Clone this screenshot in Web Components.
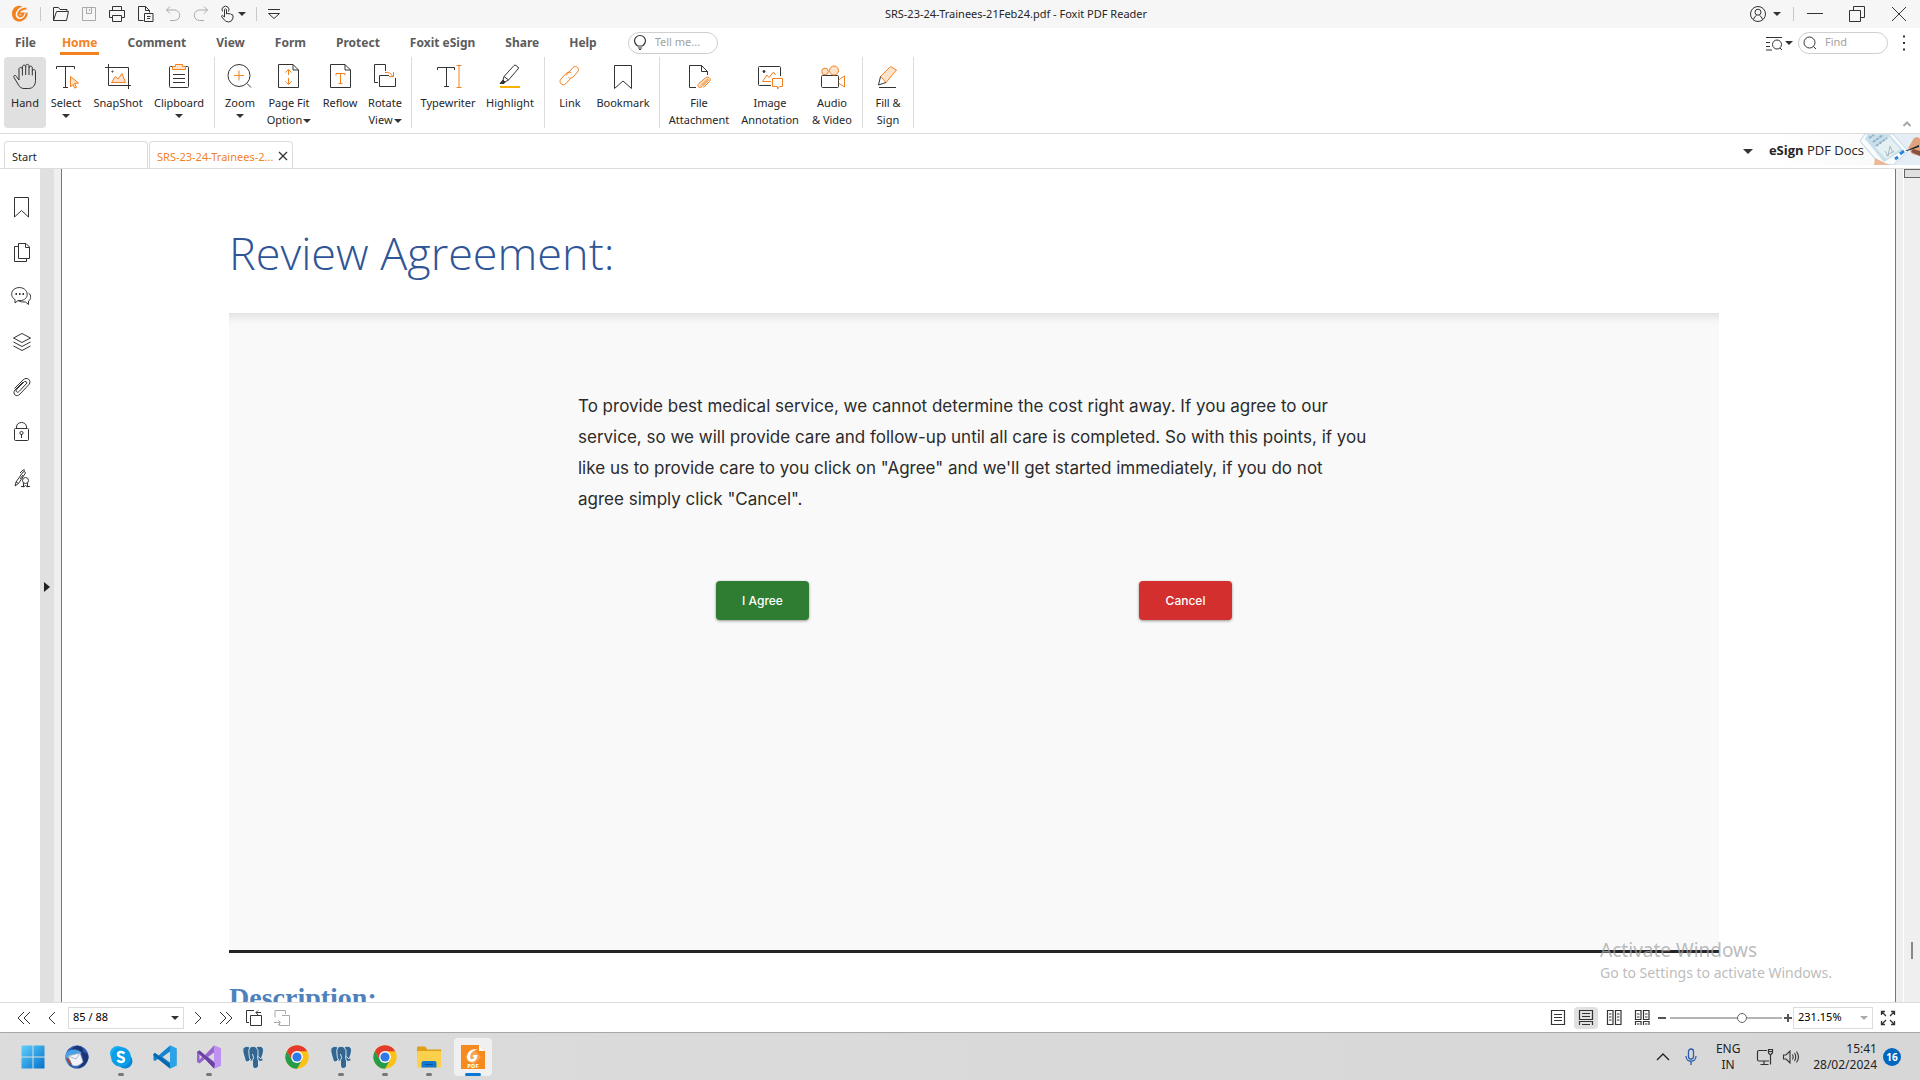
<!DOCTYPE html>
<html lang="en">
<head>
<meta charset="utf-8">
<title>SRS-23-24-Trainees-21Feb24.pdf - Foxit PDF Reader</title>
<style>
html, body { margin: 0; height: 100%; }
body { font-family: "Noto Sans", "Open Sans", sans-serif; font-size: 11px; color: #262626; background: #fff; overflow: hidden; }
</style>
</head>
<body>
<pdf-app></pdf-app>
<script>
const O = 'stroke="#f4811f"';
const ICONS = {
  logo: [18, '<path d="M11.500 1.500C5 -1 .500 4 1 9.500C1.500 15 6.500 18 11 16C15 14.500 17 11 16.500 7L14.500 8.500C14 11.500 12 14 9 14C5.500 14 4 11 5 7.500C6 4.500 8.500 2.500 11.500 1.500Z" fill="#f4811f" stroke="none"/><path d="M8.500 8.500H12.500Q11.500 11.500 9 11.500Q6.800 11 7.500 8Q9 4 15.500 3.500" stroke="#f4811f" stroke-width="2"/>'],
  open: [18, '<path d="M1.500 15.500V2.500H6.500L8 4.500H15V6.500M1.500 15.500L4.500 6.500H16.500L14.500 15.500Z"/>'],
  save: [18, '<path d="M2.500 2.500H15.500V15.500H2.500ZM6.500 2.500V8.500H11.500V2.500M9.500 4V6"/>'],
  print: [18, '<path d="M4.500 5.500V1.500H13.500V5.500M4.500 12.500H1.500V5.500H16.500V12.500H13.500M4.500 10.500H13.500V16.500H4.500Z"/>'],
  docout: [18, '<path d="M7.500 15.500H2.500V1.500H9.500L13.500 5.500V7.500M9.500 1.500V5.500H13.500M8.500 8.500H17V16.500H8.500ZM11 11.500H14.500M11 13.500H14"/>'],
  undo: [18, '<path d="M6 1.500L2.500 5L6 8.500M2.500 5H10.500A5 5 0 0 1 10.500 15.500H6"/>'],
  redo: [18, '<path d="M12 1.500L15.500 5L12 8.500M15.500 5H7.500A5 5 0 0 0 7.500 15.500H12"/>'],
  touch: [18, '<path d="M6.500 12V4.500Q7.500 3 8.500 4.500V9Q10 7.500 11 9Q12.500 8 13 9.500Q15 9 15 11V13Q14 17 10.500 17Q7.500 17 5.500 14L3.500 11.500Q3.500 9.500 6.500 12M4.500 6.500A3.500 3.500 0 1 1 10.500 6.500"/>'],
  custom: [18, '<path d="M3 4.500H15M3.500 8.500L9 13.500L14.500 8.500Z"/>'],
  user: [18, '<circle cx="9" cy="9" r="7.500"/><circle cx="9" cy="7.200" r="3"/><path d="M4.500 14.500Q5 11.500 7.500 10.500M13.500 14.500Q13 11.500 10.500 10.500"/>'],
  min: [18, '<path d="M1 8.500H17"/>'],
  restore: [18, '<path d="M5.500 5.500V1.500H16.500V12.500H12.500M1.500 5.500H12.500V16.500H1.500Z"/>'],
  close: [18, '<path d="M2 2L16 16M16 2L2 16"/>'],
  bulb: [18, '<path d="M6.500 12Q3.500 9.500 3.500 7A5.500 5.500 0 0 1 14.500 7Q14.500 9.500 11.500 12ZM7 14H11M8 15.500H10" stroke-width="1.200"/>'],
  advsearch: [18, '<path d="M1 3.500H17M1 8.500H5M1 12.500H5M1 16H7"/><circle cx="12" cy="10.500" r="4.500"/><path d="M15 14L17 16"/>'],
  search: [18, '<circle cx="8.500" cy="8.500" r="5.500"/><path d="M12.500 12.500L15 15"/>'],
  dots: [18, '<path d="M8 2.500H10M8 9H10M8 15.500H10" stroke-width="2"/>'],
  up: [10, '<path d="M1.500 7L5 3.500L8.500 7" stroke="#a8a8a8" stroke-width="2"/>'],
  x: [10, '<path d="M1 1L9 9M9 1L1 9" stroke-width="1.300"/>'],
  hand: [28, '<path d="M8 18L5.500 14.500C4.500 12.500 2 13.500 3 15.500L7.500 23C9 25.500 10.500 26.500 13 26.500H17.500C22 26.500 24.500 23 24.500 18.500V9.500C24.500 7 21.300 7 21.300 9.500V13.500M21.300 9.500V6C21.300 3.500 18 3.500 18 6V13M18 6V4C18 1.800 14.700 1.800 14.700 4V13M14.700 5C14.700 2.500 11.400 2.500 11.400 5V13.500M11.400 7C11.400 5 8 5 8 7V18"/>'],
  select: [28, '<path d="M4.500 7V4.500H22.500V7M13.500 4.500V25.500M11 25.500H16"/><path d="M18.500 14.500L26.500 21L22.500 21.500L24.500 25.500L22.500 26L21 22.500L18.500 25Z" fill="#fde3cb" '+O+'/>'],
  snapshot: [28, '<path d="M1 5.500H24.500V27M4.500 2V23.500H27"/><path d="M7.500 20.500L11.500 14.500L14 17L18 11.500L21.500 20.500Z" fill="#fde3cb" '+O+'/><circle cx="8.500" cy="9.500" r=".6"/>'],
  clipboard: [28, '<path d="M7.500 4.500H5.500Q4.500 4.500 4.500 5.500V24.500Q4.500 25.500 5.500 25.500H22.500Q23.500 25.500 23.500 24.500V5.500Q23.500 4.500 22.500 4.500H20.500M8 12.500H20M8 16.500H20M8 20.500H20"/><path d="M7.500 7.500V4.500H10.500V2.500H17.500V4.500H20.500V7.500Z" fill="#fde3cb" '+O+'/>'],
  zoom: [28, '<circle cx="13" cy="13.500" r="11"/><path d="M21 21.500L25 25.500"/><path d="M8 13.500H18M13 8.500V18.500" '+O+'/>'],
  pagefit: [28, '<path d="M3.500 2.500H18L23.500 8V25.500H3.500ZM18 2.500V8H23.500"/><path d="M13.500 8V13M10.500 10.500L13.500 7.500L16.500 10.500M13.500 16V22M10.500 19.500L13.500 22.500L16.500 19.500" '+O+'/>'],
  reflow: [28, '<path d="M4.500 2.500H19L24.500 8V25.500H4.500ZM19 2.500V8H24.500"/><path d="M10 13.500V11.500H19V13.500M14.500 11.500V21.500M12.500 21.500H16.500" '+O+'/>'],
  rotate: [28, '<path d="M7 20.500H3.500V2.500H14.500V9M12.500 13.500H8.500V24.500H24.500V16M18 13.500H12"/><path d="M14 10.500Q19.500 9.500 22 15M18 14.500H22.500V10" '+O+'/>'],
  typewriter: [28, '<path d="M3.500 8V5.500H20.500V8M12.500 5.500V24.500M10 24.500H15"/><path d="M22.500 3.500H27.500M22.500 25.500H27.500M25 3.500V25.500" '+O+'/>'],
  highlight: [28, '<path d="M8 14.500L18 3.500Q19 2.500 20 3.500L22 5Q23 6 22 7L12.500 18ZM8 14.500L7 18L9 20L12.500 18"/><path d="M7 18L4 21.500H8L9 20Z" fill="#333"/><path d="M4 25H24" stroke="#fbb000" stroke-width="2"/>'],
  link: [28, '<path d="M10 13.500L17 5.500C20 2.500 24.500 6.500 21.500 10L17 15C15.500 16.500 13.500 16.500 12.500 15.500M15.500 11C14 9.500 11.500 10 10 11.500L5 17C2 20.500 6.500 25 10 21.500L14.500 16.500" '+O+'/>'],
  bookmark: [28, '<path d="M5.500 3.500H22.500V26.500L14 19L5.500 26.500Z"/>'],
  attach: [28, '<path d="M11 25.500H4.500V3.500H16.500L22.500 9.500V13M16.500 3.500V9.500H22.500"/><path d="M16 23.500L22 17.500Q23.500 17 23 18.500L17 24.500C14 27 11.500 24 14 21.500L20 16.200C23 13.500 27 16.500 24.500 19.500L18.500 25.500" fill="#fde3cb" '+O+'/>'],
  imageann: [28, '<path d="M15 23.500H3.500Q2.500 23.500 2.500 22.500V5.500Q2.500 4.500 3.500 4.500H23.500Q24.500 4.500 24.500 5.500V14"/><circle cx="8" cy="9.500" r="1" fill="#333"/><path d="M15 19.500H6.500L11 13L13 15.500L17.500 10L19.500 13M16.500 16.500H26.500V24.500H23.500L21.500 27V24.500H16.500Z" '+O+'/>'],
  video: [28, '<rect x="3.500" y="13.500" width="17" height="12" rx="1"/><path d="M20.500 18L26.500 14V25L20.500 21" '+O+'/><circle cx="7" cy="9.500" r="3.300" fill="#fde3cb" '+O+'/><circle cx="16" cy="8.500" r="4.500" fill="#fde3cb" '+O+'/>'],
  fill: [28, '<path d="M6.500 14.500L16.500 4.500L22.500 8L12 20.500Z" fill="#fde3cb" '+O+'/><path d="M6.500 14.500L4.500 23L12 20.500M5 25.500H22"/>'],
  pages: [22, '<path d="M7 5.500H3.500V20.500H15.500V17.500M7.500 2.500H15L18.500 6V17.500H7.500ZM14.500 2.500V6.500H18.500"/>'],
  mark22: [22, '<path d="M3.500 1.500H17.500V21L10.500 14.500L3.500 21Z"/>'],
  chat: [22, '<path d="M4 13.500V17L7 14.500C19 16 19 2 8.500 1.500C-1 2 -1 11 4 13.500M17.500 7C21 9 19.500 14.500 17.500 15V18.500L14.500 16Q10 16.500 7 14.500"/><path d="M4.500 8H6M8 8H9.500M11.500 8H13" stroke-width="2"/>'],
  layers: [22, '<path d="M2.500 7L11 2.500L19.500 7L11 11.500ZM2.500 11L11 15.500L19.500 11M2.500 15L11 19.500L19.500 15"/>'],
  clip: [22, '<path d="M6 13L13.500 5.500Q15.500 5 16 7L8 15.500C6 17.500 4 15 6 13M3.500 12.500L12 4C16 0 21 4.500 18 8.500L9 18C5.500 22 1 18 4 14L12 6"/>'],
  lock: [22, '<rect x="3.500" y="7.500" width="14" height="12" rx="1"/><path d="M5.500 7.500V6C5.500 0 15.500 0 15.500 6V7.500M10.500 13V17"/><circle cx="10.500" cy="12" r="1.600"/>'],
  sign: [22, '<path d="M4 20L5 16L12 6Q14 4.500 14.500 7L7.500 17.500L4 20M9 7L12 4H14M5 16L7.500 17.500M9 13L12 9"/><circle cx="14.500" cy="14.500" r="3"/><path d="M12.500 17V21L14.500 19.500L16.500 21V17M10 20.500H12M17 20.500H19"/>'],
  first: [18, '<path d="M9 3L3 9L9 15M15 3L9 9L15 15"/>'], prev: [18, '<path d="M12 3L6 9L12 15"/>'],
  next: [18, '<path d="M6 3L12 9L6 15"/>'], last: [18, '<path d="M3 3L9 9L3 15M9 3L15 9L9 15"/>'],
  back: [18, '<path d="M4 13.500H1.500V1.500H9M5.500 6.500H16.500V16.500H5.500ZM16 3.500H11M13 1.500L11 3.500L13 6"/>'],
  fwd: [18, '<path d="M2 8.500V1.500H12.500V5M9 6.500H16.500V16.500H6.500V14M1 13.500H7M5 11L7.500 13.500L5 16"/>'],
  v1: [18, '<path d="M2.500 1.500H15.500V15.500H2.500ZM5 5.500H13M5 8.500H13M5 11.500H13" stroke-width="1.200"/>'],
  v2: [18, '<path d="M2.500 10.500V1.500H15.500V10.500ZM5 4.500H13M5 7.500H13M2.500 16V12.500H15.500V16M5 15.500H13" stroke-width="1.200"/>'],
  v3: [18, '<path d="M2.500 1.500H8V15.500H2.500ZM10.500 1.500H16V15.500H10.500ZM4 5H6.500M4 8H6.500M4 11H6.500M12 5H14.500M12 8H14.500M12 11H14.500" stroke-width="1.200"/>'],
  v4: [18, '<path d="M2.500 1.500H8V10.500H2.500ZM10.500 1.500H16V10.500H10.500ZM4 5H6.500M4 8H6.500M12 5H14.500M12 8H14.500M2.500 16V12.500H8V16M10.500 16V12.500H16V16M4 15H6.500M12 15H14.500" stroke-width="1.200"/>'],
  minus: [10, '<path d="M1 5H9" stroke="#555" stroke-width="2"/>'],
  plus: [10, '<path d="M1 5H9M5 1V9" stroke="#555" stroke-width="2"/>'],
  full: [18, '<path d="M2.500 6V2.500H6M2.500 2.500L7 7M12 2.500H15.500V6M15.500 2.500L11 7M2.500 12V15.500H6M2.500 15.500L7 11M15.500 12V15.500H12M15.500 15.500L11 11" stroke-width="1.300"/>'],
  chevup: [18, '<path d="M3 12L9 6L15 12" stroke="#222" stroke-width="1.400"/>'],
  mic: [18, '<rect x="6.500" y="1" width="5" height="10" rx="2.500" stroke="#2a5db0" stroke-width="1.300"/><path d="M4 8C4 15 14 15 14 8M9 13.500V17" stroke="#2a5db0" stroke-width="1.300"/>'],
  net: [18, '<path d="M11 2.500H3Q1.500 2.500 1.500 4V11.500Q1.500 13 3 13H13M8 13V16.500M4.500 16.500H12.500M14.500 7V16.500M12.500 1.500H16.500V5L14.500 7L12.500 5ZM12.500 3.500H16.500" stroke-width="1.200"/>'],
  vol: [18, '<path d="M1.500 7V11H4L8 15V3L4 7ZM10.500 6.500Q12 9 10.500 11.500M12.500 5Q15 9 12.500 13M14.500 3.500Q18.500 9 14.500 14.500" stroke-width="1.100"/>'],
  win: [24, '<defs><linearGradient id="w" x1="0" y1="0" x2="1" y2="1"><stop stop-color="#5fd0fb"/><stop offset="1" stop-color="#0470cc"/></linearGradient></defs><path d="M.5.500H11.500V11.500H.5ZM12.500.500H23.500V11.500H12.500ZM.5 12.500H11.500V23.500H.5ZM12.500 12.500H23.500V23.500H12.500Z" fill="url(#w)" stroke="none"/>'],
  bird: [24, '<circle cx="12" cy="12" r="11.500" fill="#2a5eb3" stroke="none"/><path d="M12 .500Q20 2 18 7Q24 8 23.500 13Q21 22 12 23.500Q20 18 17 10Q14 4 6 5Q9 1 12 .500Z" fill="#1d3577" stroke="none"/><path d="M0 12Q1 6 6 5Q12 3 17 8Q12 8 10 10Q4 12 5 17L3 19Q0 16 0 12Z" fill="#49a2e8" stroke="none"/><path d="M3 11L15 8L18 17Q12 23 7 20Z" fill="#f1f3f8" stroke="#9ba7bd" stroke-width=".7"/><path d="M3 11L11 14L15 8" stroke="#9ba7bd" stroke-width=".8"/><path d="M1 14Q3 10 7 20Q3 19 1 14Z" fill="#9a4b47" stroke="none"/>'],
  skype: [24, '<circle cx="8.500" cy="8.500" r="7.500" fill="#1bb0ef" stroke="none"/><circle cx="16" cy="16" r="7.500" fill="#0a86d8" stroke="none"/><circle cx="12" cy="12" r="10" fill="#0b9fe8" stroke="none"/><path d="M15.500 8.500Q14 7 12 7Q9 7 9 9.300Q9 11.200 12 12Q15.300 12.800 15 15Q14.500 17 12 17Q9.500 17 8.500 15.200" stroke="#fff" stroke-width="2.500"/>'],
  code: [24, '<path d="M17 .500L23.500 3.500V20.500L17 23.500L5.500 13.500L2 16L.5 15V9L2 8L5.500 10.500Z" fill="#1384cf" stroke="none"/><path d="M17 6.500L9.500 12L17 17.500Z" fill="#dadada" stroke="none"/><path d="M17 .500L23.500 3.500V20.500L17 23.500Z" fill="#29a3ea" stroke="none"/><path d="M.5 9L2 8L17 19V23.500L.5 10.500Z" fill="#0568b0" stroke="none"/>'],
  vs: [24, '<path d="M0 7L2.500 5.500L8 10L17 .500L24 3.500V20.500L17 23.500L8 14L2.500 18.500L0 17Z" fill="#9864cf" stroke="none"/><path d="M2.500 9.500V14.500L5 12ZM17 7.500L11 12L17 16.500Z" fill="#dadada" stroke="none"/><path d="M17 .500L24 3.500V20.500L17 23.500Z" fill="#be91f2" stroke="none"/><path d="M0 7L2.500 5.500L18 18.500L17 23.500L8 14Z" fill="#6942a1" stroke="none"/>'],
  pg: [24, '<path d="M2 3Q5 0 9 2Q12 .500 15 2Q20 0 22 3Q23.500 6 20.500 13L22.500 15Q20 17.500 17.500 16V21Q17 24 13.500 23.500Q11 23 11.500 16Q9 17.500 9 15Q5 20 3.500 13Q1 6 2 3Z" fill="#336791" stroke="#eef2f5" stroke-width=".8"/><path d="M9 2Q7 5 8 9Q8 13 9.500 15M15 2Q18 5 17 10Q16 13 17.500 16M11 16Q14 13 11.500 9M16.500 11L20 14" stroke="#e8edf2" stroke-width=".9"/>'],
  chrome: [24, '<circle cx="12" cy="12" r="11.700" fill="#fbc116" stroke="none"/><path d="M1.870 6.150A11.700 11.700 0 0 1 22.130 6.150H12L7 15Z" fill="#e33b2e" stroke="none"/><path d="M1.870 6.150A11.700 11.700 0 0 0 12 23.700L17.070 14.930L12 17.500L7 14.900Z" fill="#249c4b" stroke="none"/><circle cx="12" cy="12" r="5.900" fill="#fff" stroke="none"/><circle cx="12" cy="12" r="4.600" fill="#2f78e8" stroke="none"/>'],
  folder: [24, '<path d="M0 2.500Q0 1.500 1 1.500H8L10.500 4.500H24V8H0Z" fill="#dea017" stroke="none"/><rect y="6" width="24" height="16.500" rx="1" fill="#fbd04c" stroke="none"/><path d="M4.500 22.500V18Q4.500 16 6.500 16H17.500Q19.500 16 19.500 18V22.500Z" fill="#1277cf" stroke="none"/><path d="M8 19.500H16" stroke="#0c559c"/>'],
  foxit: [24, '<path d="M0 0H18L24 6V24H0Z" fill="#f68a1e" stroke="none"/><path d="M18 0V6H24Z" fill="#fff" stroke="none"/><path d="M12 4L20 12L12 20L4 12Z" fill="#f9a452" stroke="none"/><path d="M17 4.500Q9 3 6.500 9Q4.500 16 10.500 17Q16 16.500 16.500 10H12L11.500 12H13.500Q12.500 14.500 10.500 14.300Q8.500 13.500 9.500 9.500Q11 5.500 17 4.500Z" fill="#fff" stroke="none"/>']
};
function define(name, css, html, setup) {
  const tpl = document.createElement('template');
  tpl.innerHTML = '<style>:host{display:block;box-sizing:border-box}*{box-sizing:border-box}button,input,select{font:inherit;color:inherit;margin:0;border:0;background:none;padding:0;outline:0}' + css + '</style>' + html;
  customElements.define(name, class extends HTMLElement {
    constructor() { super(); this.attachShadow({ mode: 'open' }).append(tpl.content.cloneNode(true)); }
    connectedCallback() { if (setup) setup(this, this.shadowRoot); }
  });
}
// Fills an element's <i> placeholder with the icon named by its "icon" attribute.
function placeIcon(el, r) {
  const i = document.createElement('ui-icon');
  i.setAttribute('name', el.getAttribute('icon'));
  r.querySelector('i').replaceWith(i);
}
define('ui-icon', ':host{display:block;flex:none;color:#333}svg{display:block;overflow:visible}', '<svg aria-hidden="true" fill="none" stroke="currentColor"></svg>', (el, r) => {
  const [size, body] = ICONS[el.getAttribute('name')];
  const s = r.querySelector('svg');
  s.setAttribute('width', size); s.setAttribute('height', size); s.setAttribute('viewBox', `0 0 ${size} ${size}`);
  s.innerHTML = body;
});
define('ui-caret', ':host{flex:none;width:0;height:0;border:solid transparent;border-width:4px 4px 0;border-top-color:#333}', '');
define('ui-sep', ':host{flex:none;width:1px;height:14px;background:#c9c9c9}', '');
define('icon-button', ':host{flex:none}button{display:flex;align-items:center;justify-content:var(--at,center);gap:2px;width:var(--w,28px);height:28px}:host([dim]) ui-icon{color:#a9a9a9}', '<button type="button"><i></i><slot></slot></button>', (el, r) => {
  r.querySelector('button').setAttribute('aria-label', el.getAttribute('icon'));
  placeIcon(el, r);
});
define('search-pill', ':host{flex:none;width:var(--w)}label{display:flex;align-items:center;gap:6px;height:22px;border:1px solid #cfcfcf;border-radius:11px;padding-left:2px}input{flex:1;min-width:0;height:20px;padding-bottom:2px}input::placeholder{color:#a2a2a2;opacity:1}', '<label><i></i><input type="text"></label>', (el, r) => {
  placeIcon(el, r);
  const n = r.querySelector('input'); n.placeholder = el.getAttribute('hint'); n.setAttribute('aria-label', el.getAttribute('hint'));
});
define('title-bar', ':host{display:flex;align-items:center;height:28px;background:#f6f6f6;padding-left:11px}h1{flex:1;margin:0;padding-bottom:2px;text-align:center;font-size:11px;font-weight:400;white-space:nowrap}.l,.r{display:flex;align-items:center}.l ui-sep:first-of-type{margin:0 6px 0 11px}.l ui-sep:last-of-type{margin:0 8px 0 10px}',
  `<div class="l"><ui-icon name="logo"></ui-icon><ui-sep></ui-sep><icon-button icon="open"></icon-button><icon-button icon="save" dim></icon-button><icon-button icon="print"></icon-button><icon-button icon="docout"></icon-button><icon-button icon="undo" dim></icon-button><icon-button icon="redo" dim></icon-button><icon-button icon="touch" style="--w:31px;--at:flex-end"><ui-caret></ui-caret></icon-button><ui-sep></ui-sep><icon-button icon="custom" style="--w:18px"></icon-button></div>
  <h1>SRS-23-24-Trainees-21Feb24.pdf - Foxit PDF Reader</h1>
  <div class="r"><icon-button icon="user" style="--w:44px;--at:flex-start"><ui-caret style="margin-left:4px"></ui-caret></icon-button><ui-sep></ui-sep><icon-button icon="min" style="--w:42px"></icon-button><icon-button icon="restore" style="--w:42px"></icon-button><icon-button icon="close" style="--w:42px"></icon-button></div>`);
define('menu-bar', ':host{display:flex;align-items:center;height:29px;padding-left:13px}nav{display:flex;gap:26px;margin-right:29px}button{padding:0 2px;height:25px;font-size:12px;font-weight:700;color:#5c5c5c;border-bottom:3px solid transparent;padding-top:3px;white-space:nowrap}.on{color:#f4811f;border-color:#f4811f;margin-left:-4px}.r{margin-left:auto;display:flex;align-items:center}',
  `<nav><button>File</button><button class="on">Home</button><button>Comment</button><button>View</button><button>Form</button><button>Protect</button><button>Foxit eSign</button><button>Share</button><button>Help</button></nav><search-pill icon="bulb" hint="Tell me..." style="--w:90px"></search-pill>
  <div class="r"><icon-button icon="advsearch" style="--w:38px"><ui-caret></ui-caret></icon-button><search-pill icon="search" hint="Find" style="--w:90px"></search-pill><icon-button icon="dots" style="--w:32px"></icon-button></div>`);
define('tool-button', ':host{flex:none;width:var(--w)}button{display:flex;flex-direction:column;align-items:center;width:100%;height:71px;padding-top:5px;border-radius:4px}:host([active]) button{background:#e0e0e0}span{display:block;margin-top:4px;line-height:17px;white-space:nowrap;text-align:center}ui-caret{margin-top:3px}:host(:not([caret])) ui-caret{display:none}', '<button type="button"><i></i><span><slot></slot></span><ui-caret></ui-caret></button>', placeIcon);
define('tool-group', ':host{display:flex;padding:0 4px;border-right:1px solid #dcdcdc;height:71px}', '<slot></slot>');
define('ribbon-bar', ':host{display:flex;height:77px;border-bottom:1px solid #dcdcdc}.in{display:inline-block;vertical-align:middle;margin-left:1px}.up{margin:auto 8px 4px auto}',
  `<tool-group style="padding-right:6px"><tool-button icon="hand" active style="--w:42px">Hand</tool-button><tool-button icon="select" caret style="--w:40px">Select</tool-button><tool-button icon="snapshot" style="--w:64px">SnapShot</tool-button><tool-button icon="clipboard" caret style="--w:58px">Clipboard</tool-button></tool-group>
  <tool-group><tool-button icon="zoom" caret style="--w:42px">Zoom</tool-button><tool-button icon="pagefit" style="--w:56px">Page Fit<br>Option<ui-caret class="in"></ui-caret></tool-button><tool-button icon="reflow" style="--w:46px">Reflow</tool-button><tool-button icon="rotate" style="--w:44px">Rotate<br>View<ui-caret class="in"></ui-caret></tool-button></tool-group>
  <tool-group><tool-button icon="typewriter" style="--w:64px">Typewriter</tool-button><tool-button icon="highlight" style="--w:60px">Highlight</tool-button></tool-group>
  <tool-group><tool-button icon="link" style="--w:42px">Link</tool-button><tool-button icon="bookmark" style="--w:64px">Bookmark</tool-button></tool-group>
  <tool-group><tool-button icon="attach" style="--w:70px">File<br>Attachment</tool-button><tool-button icon="imageann" style="--w:72px">Image<br>Annotation</tool-button><tool-button icon="video" style="--w:52px">Audio<br>&amp; Video</tool-button></tool-group>
  <tool-group><tool-button icon="fill" style="--w:42px">Fill &amp;<br>Sign</tool-button></tool-group><ui-icon class="up" name="up"></ui-icon>`);
define('tab-strip', ':host{display:flex;align-items:flex-end;height:35px;border-bottom:1px solid #dcdcdc;padding-left:4px;gap:1px}.tab{display:flex;align-items:center;justify-content:space-between;width:144px;height:27px;border:1px solid #dcdcdc;border-bottom:0;border-radius:4px 4px 0 0;padding:2px 4px 0 7px;white-space:nowrap}.on{color:#f4811f}.r{margin-left:auto;align-self:stretch;display:flex;align-items:center;gap:16px}ui-caret{border-width:5px 5px 0}.ad{display:flex;height:31px;align-self:flex-start;align-items:center;font-family:"Open Sans","Noto Sans",sans-serif;font-size:13px;color:#262626;text-decoration:none;white-space:nowrap;background:linear-gradient(90deg,#fff,#f8f8f8)}svg{display:block;margin-left:-5px}',
  `<button class="tab">Start</button><button class="tab on"><span>SRS-23-24-Trainees-2...</span><ui-icon name="x"></ui-icon></button>
  <div class="r"><ui-caret></ui-caret><a class="ad" href="#"><b>eSign</b>&nbsp;PDF Docs<svg width="61" height="31" viewBox="0 0 61 31"><path d="M12 0H61V31H20L1 8Z" fill="#e4eef4"/><path d="M6 0L1 7L20 29L34 31L49 17L34 0Z" fill="#f9fcfd" stroke="#c3d6df"/><path d="M9 0L6 5L25 28L44 16L30 0Z" fill="#c9dfeb"/><path d="M16 13L30 3L41 15L27 25Z" fill="#e4f0f2"/><path d="M10 4L15 1M14 8L24 1M17 12L28 4" stroke="#8fb0c6" stroke-width="2" stroke-dasharray="3 1"/><path d="M26 17L29 22L31 12L34 19M27 22L35 17" stroke="#a9bcc3" fill="none"/><path d="M36 25L39 23M41 20L45 17" stroke="#2d84da" stroke-width="3"/><path d="M15 31L16 24L22 27L30 31Z" fill="#eab894"/><path d="M48 16L55 4Q61 2 61 6V22L53 20L50 14Z" fill="#dfa27c"/><path d="M61 22L52 18L54 15L61 17Z" fill="#8a5140"/><path d="M46 17L60 11V13L48 17Z" fill="#1e2730"/></svg></a></div>`);
define('side-nav', ':host{display:flex;flex:none;width:61px}nav{width:40px;padding:15px 0 0 3px;display:flex;flex-direction:column}nav icon-button{height:45px;padding-top:9px;--w:37px}.grip{width:14px;background:#e0e0e0;display:flex;align-items:center;justify-content:center;padding-top:2px}.grip button{border:solid transparent;border-width:5px 0 5px 6px;border-left-color:#222}.gap{flex:1;background:#efefef}',
  '<nav><icon-button icon="mark22"></icon-button><icon-button icon="pages"></icon-button><icon-button icon="chat"></icon-button><icon-button icon="layers"></icon-button><icon-button icon="clip"></icon-button><icon-button icon="lock"></icon-button><icon-button icon="sign"></icon-button></nav><div class="grip"><button aria-label="Expand panel"></button></div><div class="gap"></div>');
define('mui-button', ':host{justify-self:center}button{width:93px;height:39px;border-radius:4px;background:var(--c);color:#fff;font:500 12px Inter,sans-serif;box-shadow:0 1px 3px rgba(0,0,0,.4)}', '<button type="button"><slot></slot></button>');
define('agreement-shot', ':host{background:#f9f9f9;box-shadow:inset 0 14px 12px -12px rgba(0,0,0,.14);border-bottom:3px solid #222426;padding:78px 0 330px}.in{width:846px;margin:0 auto}p{margin:0 0 66px;padding-left:27px;font:400 17px/31px Inter,sans-serif;color:#2b2b2b;white-space:nowrap}.b{display:grid;grid-template-columns:1fr 1fr}',
  `<div class="in"><p>To provide best medical service, we cannot determine the cost right away. If you agree to our<br>service, so we will provide care and follow-up until all care is completed. So with this points, if you<br>like us to provide care to you click on "Agree" and we'll get started immediately, if you do not<br>agree simply click "Cancel".</p><div class="b"><mui-button style="--c:#2e7d32">I Agree</mui-button><mui-button style="--c:#d32f2f">Cancel</mui-button></div></div>`);
define('doc-view', ':host{position:relative;flex:1;min-width:0;display:flex;overflow:hidden}.page{flex:1;background:#fff;border:solid #777;border-width:0 1px;padding:54px 176px 0 167px}h1{margin:0 0 30px;font:300 45px/60px "Open Sans","Noto Sans",sans-serif;color:#2f5597}h2{margin:29px 0 0;font:700 28px/32px "Liberation Serif",serif;color:#4f81bd}.gap{width:7px;background:#efefef}.bar{width:17px;background:#efefef;border-left:1px solid #fff;display:flex;flex-direction:column;align-items:center}.thumb{width:17px;height:9px;background:#e0e0e0;border:1px solid #666}.tick{width:2px;height:17px;background:#888;margin:auto 0 43px}.wm{position:absolute;right:88px;bottom:18px;color:rgba(165,165,165,.75)}.wm div:first-child{font-size:19px;line-height:24px}.wm div:last-child{font-size:14px;line-height:22px}',
  `<article class="page"><h1>Review Agreement:</h1><agreement-shot></agreement-shot><h2>Description:</h2></article><div class="gap"></div><div class="bar"><div class="thumb"></div><div class="tick"></div></div><div class="wm"><div>Activate Windows</div><div>Go to Settings to activate Windows.</div></div>`);
define('combo-box', ':host{flex:none;width:var(--w)}label{display:flex;align-items:center;height:22px;border:1px solid #dcdcdc;padding:0 4px}select{flex:1;appearance:none;color:#000;padding-bottom:2px}ui-caret{pointer-events:none}', '<label><select><option></option></select><ui-caret></ui-caret></label>', (el, r) => {
  r.querySelector('option').textContent = el.getAttribute('value'); r.querySelector('select').setAttribute('aria-label', el.getAttribute('label'));
  if (el.hasAttribute('dim')) r.querySelector('ui-caret').style.borderTopColor = '#aaa';
});
define('status-bar', ':host{display:flex;align-items:center;height:31px;border-top:1px solid #dcdcdc;border-bottom:1px solid #a8a8a8;padding:0 17px 0 10px}.r{margin-left:auto;display:flex;align-items:center}.on{background:#e0e0e0;border-radius:4px;height:22px;display:flex;align-items:center;margin:0 2px}input{appearance:none;width:112px;height:16px;margin:0 1px 0 3px}input::-webkit-slider-runnable-track{height:2px;background:#b4b4b4}input::-webkit-slider-thumb{appearance:none;width:10px;height:10px;margin-top:-4px;border-radius:5px;border:1px solid #666;background:#fff}',
  `<icon-button icon="first"></icon-button><icon-button icon="prev"></icon-button><combo-box value="85 / 88" label="Page" style="--w:116px;margin-left:2px"></combo-box><icon-button icon="next"></icon-button><icon-button icon="last"></icon-button><icon-button icon="back"></icon-button><icon-button icon="fwd" dim></icon-button>
  <div class="r"><icon-button icon="v1"></icon-button><div class="on"><icon-button icon="v2" style="--w:24px"></icon-button></div><icon-button icon="v3"></icon-button><icon-button icon="v4"></icon-button><ui-icon name="minus" style="margin-left:1px"></ui-icon><input type="range" aria-label="Zoom level" min="0" max="100" value="66"><ui-icon name="plus"></ui-icon><combo-box value="231.15%" label="Zoom" dim style="--w:80px"></combo-box><icon-button icon="full" style="--w:30px"></icon-button></div>`);
define('task-item', ':host{flex:none;width:44px}button{position:relative;display:flex;align-items:center;justify-content:center;width:38px;height:38px;margin:0 auto;border-radius:4px}:host([active]) button{background:#f0f0f0}:host([run]) button::after,:host([active]) button::after{content:"";position:absolute;bottom:0;left:50%;transform:translateX(-50%);width:6px;height:3px;border-radius:2px;background:#777}:host([active]) button::after{width:16px;background:#0a78d4}b{position:absolute;bottom:6px;left:0;right:0;text-align:center;font-size:6px;line-height:7px;color:#fff}', '<button type="button"><i></i><b><slot></slot></b></button>', (el, r) => {
  placeIcon(el, r);
  r.querySelector('button').setAttribute('aria-label', el.getAttribute('icon'));
});
define('task-bar', ':host{display:flex;align-items:center;height:47px;background:linear-gradient(90deg,#dcdcdc,#d7d7d7);padding:0 19px 0 11px}.r{margin-left:auto;display:flex;align-items:center;color:#222}.lang,.clock{line-height:16px;font-size:12px}.lang{text-align:center;width:46px}.clock{text-align:right;margin-left:10px}.badge{width:18px;height:18px;border-radius:9px;background:#0067c0;color:#fff;font-size:10px;font-weight:700;line-height:18px;text-align:center;margin-left:6px}',
  `<task-item icon="win"></task-item><task-item icon="bird"></task-item><task-item icon="skype" run></task-item><task-item icon="code"></task-item><task-item icon="vs" run></task-item><task-item icon="pg"></task-item><task-item icon="chrome"></task-item><task-item icon="pg" run></task-item><task-item icon="chrome" run></task-item><task-item icon="folder" run></task-item><task-item icon="foxit" active>PDF</task-item>
  <div class="r"><icon-button icon="chevup"></icon-button><icon-button icon="mic"></icon-button><div class="lang">ENG<br>IN</div><icon-button icon="net"></icon-button><icon-button icon="vol" style="--w:24px"></icon-button><div class="clock">15:41<br>28/02/2024</div><div class="badge">16</div></div>`);
define('pdf-app', ':host{display:flex;flex-direction:column;height:100vh}main{flex:1;min-height:0;display:flex}',
  '<title-bar></title-bar><menu-bar></menu-bar><ribbon-bar></ribbon-bar><tab-strip></tab-strip><main><side-nav></side-nav><doc-view></doc-view></main><status-bar></status-bar><task-bar></task-bar>');
</script>
</body>
</html>
